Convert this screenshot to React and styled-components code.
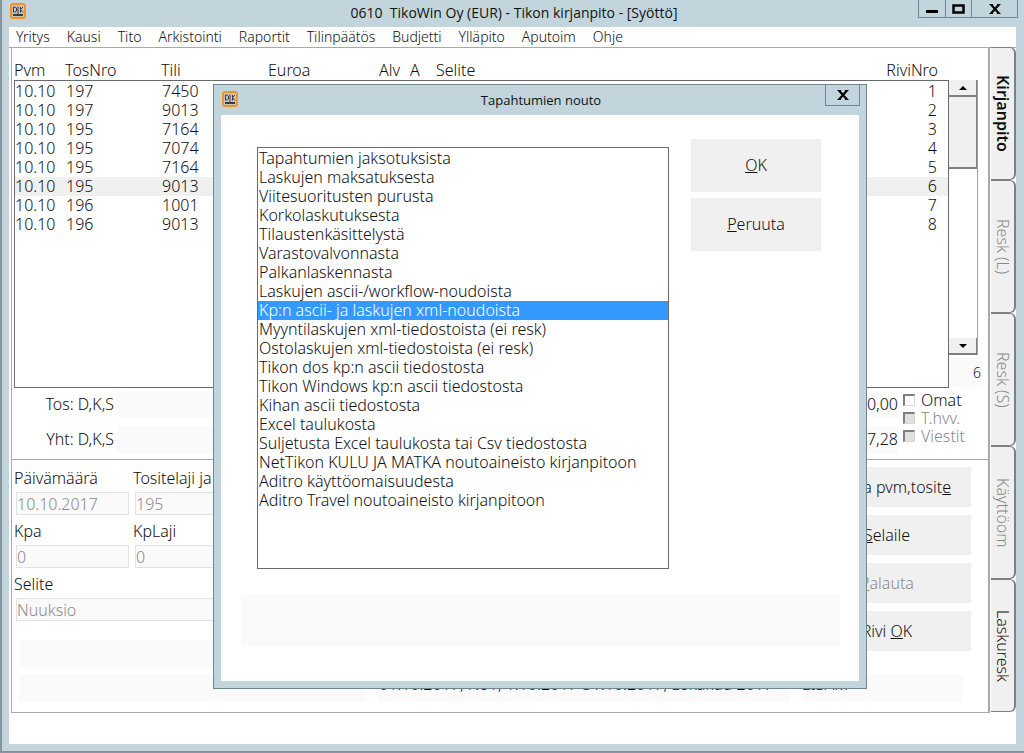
import styled, { createGlobalStyle } from "styled-components";

const GlobalStyle = createGlobalStyle`
  *, *::before, *::after {
    box-sizing: border-box;
  }
  body {
    margin: 0;
    background-color: #8d95a3;
    color: #111;
    font-family: "Noto Sans", sans-serif;
    font-size: 16px;
    font-weight: 300;
    line-height: 19px;
  }
  button, input {
    font: inherit;
    color: inherit;
  }
`;

const Window = styled.div`
  position: relative;
  display: flex;
  flex-direction: column;
  min-height: calc(100vh - 1px);
  margin-left: 1px;
  padding: 0 8px 7px 7px;
  border-left: 1px solid #7d9199;
  border-bottom: 1px solid #7d9199;
  background-color: #c3d5dc;
`;

const TitleBar = styled.header`
  display: flex;
  height: 27px;
  margin-right: -2px;
`;

const TitleIcon = styled.div`
  flex: 1;
  padding: 3px 0 0 1px;
`;

const Title = styled.h1`
  margin: 0;
  font-family: "Open Sans", sans-serif;
  font-size: 14px;
  line-height: 26px;
  font-weight: 400;
  white-space: pre;
`;

const CaptionButtons = styled.div`
  flex: 1;
  display: flex;
  justify-content: flex-end;
  align-items: flex-start;
`;

const CaptionButton = styled.button`
  width: ${(props) => props.$width}px;
  height: ${(props) => props.$height || 18}px;
  display: flex;
  align-items: center;
  justify-content: center;
  margin-left: -1px;
  padding: 0;
  border: 1px solid #6f8791;
  border-top: 0;
  background-color: transparent;
`;

const Client = styled.div`
  flex: 1;
  background-color: #fff;
`;

const MenuBar = styled.nav`
  display: flex;
  gap: 17px;
  height: 21px;
  padding: 0 7px;
  font-size: 14px;
  line-height: 20px;
  border-bottom: 1px solid #a9a9a9;
`;

const MenuItem = styled.button`
  padding: 0;
  border: 0;
  background: none;
`;

const Workspace = styled.div`
  display: flex;
  margin-left: 2px;
`;

const Panels = styled.main`
  flex: 1;
  min-width: 0;
  border: 1px solid #a9a9a9;
  border-top: 0;
  border-right-width: 2px;
`;

const EntryPanel = styled.section`
  padding: 12px 6px 6px 2px;
  border-bottom: 1px solid #a9a9a9;
`;

const EntryArea = styled.div`
  display: flex;
  align-items: flex-start;
`;

const EntryTable = styled.table`
  flex: 1;
  display: block;
`;

const EntryHead = styled.thead`
  display: block;
`;

const EntryBody = styled.tbody`
  display: block;
  height: 308px;
  padding-top: 1px;
  border: 1px solid #6a6a6a;
`;

const EntryRow = styled.tr`
  display: grid;
  grid-template-columns: 51px 96px 107px 111px 31px 26px 1fr auto;
  padding-right: 11px;
  background-color: ${(props) => (props.$current ? "#f0f0f0" : "transparent")};
`;

const HeadCell = styled.th`
  padding: 0;
  font-weight: 300;
  line-height: 20px;
  text-align: left;
`;

const Cell = styled.td`
  padding: 0;
`;

const SideColumn = styled.div`
  width: 33px;
  padding-top: 20px;
`;

const Scrollbar = styled.div`
  width: 29px;
  height: 275px;
  display: flex;
  flex-direction: column;
  border-right: 1px solid #a0a0a0;
`;

const ScrollButton = styled.button`
  height: 17px;
  padding: 0;
  display: flex;
  align-items: center;
  justify-content: center;
  border: 0;
  border-right: 1px solid #808080;
  border-bottom: 2px solid #808080;
  background-color: #f0f0f0;
`;

const ScrollThumb = styled.div`
  height: 72px;
  border-right: 1px solid #808080;
  border-bottom: 2px solid #808080;
  background-color: #f0f0f0;
`;

const ScrollTrack = styled.div`
  flex: 1;
`;

const RowCount = styled.div`
  margin-top: 2px;
  padding: 6px 1px 5px;
  font-size: 14px;
  text-align: right;
  background-color: #fafafa;
`;

const Totals = styled.div`
  display: flex;
  gap: 5px;
  padding-top: 3px;
`;

const SumRows = styled.div`
  flex: 1;
  display: grid;
  gap: 8px;
`;

const SumRow = styled.div`
  display: flex;
  gap: 3px;
  line-height: 27px;
`;

const SumLabel = styled.div`
  width: 100px;
  text-align: right;
`;

const SumValue = styled.div`
  flex: 1;
  text-align: right;
  background-color: #fafafa;
`;

const Checks = styled.div`
  width: 79px;
`;

const CheckLabel = styled.label`
  height: 18px;
  display: flex;
  align-items: center;
  gap: 6px;
  line-height: 18px;
  color: ${(props) => (props.$off ? "#8a8a8a" : "inherit")};
`;

const Check = styled.input`
  appearance: none;
  width: 12px;
  height: 12px;
  margin: 0;
  border: 1px solid #d8d8d8;
  border-top: 2px solid #808080;
  border-left: 2px solid #808080;
  background-color: #fff;
  &:disabled {
    background-color: #e0e0e0;
  }
`;

const FormPanel = styled.section`
  display: grid;
  grid-template-columns: 1fr 168px;
  row-gap: 8px;
  padding: 7px 17px 10px 2px;
`;

const Fields = styled.div`
  display: grid;
  gap: 5px;
  align-content: start;
`;

const FieldRow = styled.div`
  display: grid;
  grid-template-columns: ${(props) => (props.$split ? "115px 1fr" : "1fr")};
  gap: 4px;
`;

const Field = styled.label`
  display: block;
  line-height: 22px;
`;

const FieldInput = styled.input`
  display: block;
  width: calc(100% - 2px);
  height: 23px;
  margin: 3px 0 0 2px;
  padding: 0;
  border: 1px solid #e2e2e2;
  background-color: #fafafa;
  color: #8a8a8a;
`;

const Actions = styled.div`
  display: grid;
  gap: 8px;
  align-content: start;
`;

const Button = styled.button`
  height: ${(props) => (props.$tall ? 53 : 40)}px;
  padding: 0;
  border: 0;
  background-color: #f0f0f0;
  &:disabled {
    color: #8a8a8a;
  }
`;

const InfoBar = styled.div`
  height: 27px;
  margin: 14px 12px 0 5px;
  background-color: #fafafa;
`;

const StatusRow = styled.footer`
  grid-column: 1 / -1;
  display: grid;
  grid-template-columns: 347px 1fr 161px;
  gap: 13px;
  padding: 0 8px 0 5px;
`;

const StatusCell = styled.div`
  height: 27px;
  white-space: nowrap;
  background-color: #fafafa;
`;

const Tabs = styled.div`
  width: 26px;
  margin-top: -1px;
  padding-left: 1px;
`;

const Tab = styled.button`
  display: block;
  width: 25px;
  height: 133px;
  padding: 0;
  writing-mode: vertical-rl;
  line-height: 20px;
  text-align: center;
  border: 1px solid #808080;
  border-left: 0;
  border-right-width: 2px;
  border-radius: 0 6px 6px 0;
  background-color: #f0f0f0;
  font-weight: ${(props) => (props.$active ? 600 : 300)};
  &:disabled {
    color: #8a8a8a;
  }
`;

const Dialog = styled.section`
  position: absolute;
  top: 84px;
  left: 211px;
  right: 157px;
  padding: 0 7px 7px;
  border: 1px solid #6f8791;
  background-color: #c3d5dc;
`;

const DialogBar = styled.header`
  display: flex;
  height: 30px;
  margin-right: -1px;
`;

const DialogIcon = styled.div`
  flex: 1;
  padding: 6px 0 0 1px;
`;

const DialogTitle = styled.h2`
  margin: 0;
  font-family: "Open Sans", sans-serif;
  font-size: 13px;
  font-weight: 400;
  line-height: 31px;
`;

const DialogBody = styled.div`
  display: grid;
  grid-template-columns: 1fr 149px;
  gap: 26px 22px;
  padding: 24px 19px 34px 20px;
  background-color: #fff;
`;

const ListBox = styled.ul`
  height: 422px;
  margin: 8px 0 0 16px;
  padding: 1px 0;
  list-style: none;
  border: 1px solid #6a6a6a;
`;

const ListItem = styled.li`
  padding-left: 1px;
  white-space: nowrap;
  background-color: ${(props) => (props.$selected ? "#3399ff" : "transparent")};
  color: ${(props) => (props.$selected ? "#fff" : "inherit")};
`;

const DialogActions = styled.div`
  display: grid;
  gap: 6px;
  align-content: start;
  margin-right: 19px;
`;

const DialogStatus = styled.div`
  grid-column: 1 / -1;
  height: 52px;
  background-color: #fafafa;
`;

const menus = ["Yritys", "Kausi", "Tito", "Arkistointi", "Raportit", "Tilinpäätös", "Budjetti", "Ylläpito", "Aputoim", "Ohje"];

const columns = ["Pvm", "TosNro", "Tili", "Euroa", "Alv", "A", "Selite", "RiviNro"];

const entries = [
  ["10.10", "197", "7450"],
  ["10.10", "197", "9013"],
  ["10.10", "195", "7164"],
  ["10.10", "195", "7074"],
  ["10.10", "195", "7164"],
  ["10.10", "195", "9013"],
  ["10.10", "196", "1001"],
  ["10.10", "196", "9013"],
];

const sources = [
  "Tapahtumien jaksotuksista",
  "Laskujen maksatuksesta",
  "Viitesuoritusten purusta",
  "Korkolaskutuksesta",
  "Tilaustenkäsittelystä",
  "Varastovalvonnasta",
  "Palkanlaskennasta",
  "Laskujen ascii-/workflow-noudoista",
  "Kp:n ascii- ja laskujen xml-noudoista",
  "Myyntilaskujen xml-tiedostoista (ei resk)",
  "Ostolaskujen xml-tiedostoista (ei resk)",
  "Tikon dos kp:n ascii tiedostosta",
  "Tikon Windows kp:n ascii tiedostosta",
  "Kihan ascii tiedostosta",
  "Excel taulukosta",
  "Suljetusta Excel taulukosta tai Csv tiedostosta",
  "NetTikon KULU JA MATKA noutoaineisto kirjanpitoon",
  "Aditro käyttöomaisuudesta",
  "Aditro Travel noutoaineisto kirjanpitoon",
];

const AppIcon = () => (
  <svg width="16" height="16" viewBox="0 0 16 16" aria-hidden="true">
    <rect x="1" y="1" width="14" height="14" rx="2" fill="#c9c3b8" stroke="#f0932b" strokeWidth="2" />
    <path d="M3.5 4v5h1.5l1.500-1V5l-1.500-1zM8 3.500v7.500M10.500 4v5.500M13 4l-2.500 2.500L13 9.500" fill="none" stroke="#3b3b4a" />
    <path d="M3 12h10" stroke="#3b3b4a" strokeWidth="2" />
  </svg>
);

const MinimizeGlyph = () => (
  <svg width="12" height="10" viewBox="0 0 12 10" aria-hidden="true">
    <path d="M0 7.500h12" stroke="#000" strokeWidth="3" />
  </svg>
);

const MaximizeGlyph = () => (
  <svg width="13" height="10" viewBox="0 0 13 10" aria-hidden="true">
    <rect x="1.5" y="1.5" width="10" height="7" fill="none" stroke="#000" strokeWidth="2.5" />
  </svg>
);

const CloseGlyph = () => (
  <svg width="12" height="10" viewBox="0 0 12 10" aria-hidden="true">
    <path d="M2 0.5l8 9M10 0.5l-8 9" stroke="#000" strokeWidth="2.2" />
    <path d="M0.5 0.5h3.5M8 0.5h3.5M0.5 9.5h3.5M8 9.5h3.5" stroke="#000" />
  </svg>
);

const Arrow = ({ down }) => (
  <svg width="8" height="4" viewBox="0 0 8 4" aria-hidden="true">
    <path d={down ? "M0 0h8L4 4z" : "M0 4h8L4 0z"} fill="#000" />
  </svg>
);

const App = () => {
  return (
    <>
      <GlobalStyle />
      <Window>
        <TitleBar>
          <TitleIcon><AppIcon /></TitleIcon>
          <Title>{"0610  TikoWin Oy (EUR) - Tikon kirjanpito - [Syöttö]"}</Title>
          <CaptionButtons>
            <CaptionButton $width={28} aria-label="Pienennä"><MinimizeGlyph /></CaptionButton>
            <CaptionButton $width={27} aria-label="Suurenna"><MaximizeGlyph /></CaptionButton>
            <CaptionButton $width={47} aria-label="Sulje"><CloseGlyph /></CaptionButton>
          </CaptionButtons>
        </TitleBar>
        <Client>
          <MenuBar>
            {menus.map((menu) => <MenuItem key={menu}>{menu}</MenuItem>)}
          </MenuBar>
          <Workspace>
            <Panels>
              <EntryPanel>
                <EntryArea>
                  <EntryTable>
                    <EntryHead>
                      <EntryRow>
                        {columns.map((column) => <HeadCell key={column}>{column}</HeadCell>)}
                      </EntryRow>
                    </EntryHead>
                    <EntryBody>
                      {entries.map(([date, voucher, account], index) => (
                        <EntryRow key={index} $current={index === 5}>
                          <Cell>{date}</Cell>
                          <Cell>{voucher}</Cell>
                          <Cell>{account}</Cell>
                          <Cell />
                          <Cell />
                          <Cell />
                          <Cell />
                          <Cell>{index + 1}</Cell>
                        </EntryRow>
                      ))}
                    </EntryBody>
                  </EntryTable>
                  <SideColumn>
                    <Scrollbar>
                      <ScrollButton aria-label="Ylös"><Arrow /></ScrollButton>
                      <ScrollThumb />
                      <ScrollTrack />
                      <ScrollButton aria-label="Alas"><Arrow down /></ScrollButton>
                    </Scrollbar>
                    <RowCount>6</RowCount>
                  </SideColumn>
                </EntryArea>
                <Totals>
                  <SumRows>
                    <SumRow>
                      <SumLabel>Tos: D,K,S</SumLabel>
                      <SumValue>0,00</SumValue>
                    </SumRow>
                    <SumRow>
                      <SumLabel>Yht: D,K,S</SumLabel>
                      <SumValue>7,28</SumValue>
                    </SumRow>
                  </SumRows>
                  <Checks>
                    <CheckLabel><Check type="checkbox" />Omat</CheckLabel>
                    <CheckLabel $off><Check type="checkbox" disabled />T.hvv.</CheckLabel>
                    <CheckLabel $off><Check type="checkbox" disabled />Viestit</CheckLabel>
                  </Checks>
                </Totals>
              </EntryPanel>
              <FormPanel>
                <Fields>
                  <FieldRow $split>
                    <Field>Päivämäärä<FieldInput defaultValue="10.10.2017" disabled /></Field>
                    <Field>Tositelaji ja<FieldInput defaultValue="195" disabled /></Field>
                  </FieldRow>
                  <FieldRow $split>
                    <Field>Kpa<FieldInput defaultValue="0" disabled /></Field>
                    <Field>KpLaji<FieldInput defaultValue="0" disabled /></Field>
                  </FieldRow>
                  <FieldRow>
                    <Field>Selite<FieldInput defaultValue="Nuuksio" disabled /></Field>
                  </FieldRow>
                  <InfoBar />
                </Fields>
                <Actions>
                  <Button>Vaihda pvm,tosit<u>e</u></Button>
                  <Button><u>S</u>elaile</Button>
                  <Button disabled><u>P</u>alauta</Button>
                  <Button>Rivi <u>O</u>K</Button>
                </Actions>
                <StatusRow>
                  <StatusCell />
                  <StatusCell>01.10.2017, No1, 1.10.2017-31.10.2017, Lokakuu 2017</StatusCell>
                  <StatusCell>EISAM</StatusCell>
                </StatusRow>
              </FormPanel>
            </Panels>
            <Tabs>
              <Tab $active>Kirjanpito</Tab>
              <Tab disabled>Resk (L)</Tab>
              <Tab disabled>Resk (S)</Tab>
              <Tab disabled>Käyttöom</Tab>
              <Tab>Laskuresk</Tab>
            </Tabs>
          </Workspace>
        </Client>
        <Dialog role="dialog" aria-labelledby="dialog-title">
          <DialogBar>
            <DialogIcon><AppIcon /></DialogIcon>
            <DialogTitle id="dialog-title">Tapahtumien nouto</DialogTitle>
            <CaptionButtons>
              <CaptionButton $width={35} $height={21} aria-label="Sulje"><CloseGlyph /></CaptionButton>
            </CaptionButtons>
          </DialogBar>
          <DialogBody>
            <ListBox role="listbox" aria-labelledby="dialog-title">
              {sources.map((source, index) => (
                <ListItem key={source} role="option" aria-selected={index === 8} $selected={index === 8}>
                  {source}
                </ListItem>
              ))}
            </ListBox>
            <DialogActions>
              <Button $tall><u>O</u>K</Button>
              <Button $tall><u>P</u>eruuta</Button>
            </DialogActions>
            <DialogStatus />
          </DialogBody>
        </Dialog>
      </Window>
    </>
  )
}
export default App;
